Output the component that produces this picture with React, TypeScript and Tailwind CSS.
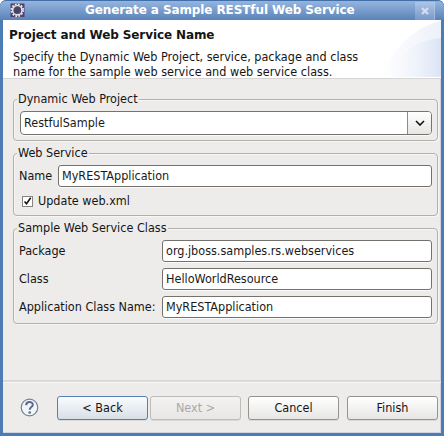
import type { ReactNode } from "react";

function Group({ title, className, children }: { title: string; className: string; children: ReactNode }) {
  return (
    <section className={`relative ml-[10px] w-[425px] rounded-[4px] border border-[#b2b0ad] shadow-[inset_1px_1px_0_#f8f7f6,1px_1px_0_#f8f7f6] ${className}`}>
      <h2 className="absolute -top-[9px] left-[3px] bg-[#edeceb] pr-px pl-px leading-[15px]">{title}</h2>
      {children}
    </section>
  );
}

function Field({ value, className }: { value: string; className: string }) {
  return (
    <input
      readOnly
      value={value}
      className={`h-[22px] rounded-[3px] border border-[#75726e] bg-white pr-1 pb-px pl-[3px] text-[#1a1a1a] shadow-[0_1px_0_#fafafa] outline-none ${className}`}
    />
  );
}

function Row({ label, value }: { label: string; value: string }) {
  return (
    <div className="flex h-[22px] items-center pl-[5px]">
      <label className="w-[144px] pb-[2px]">{label}</label>
      <Field value={value} className="-ml-px w-[270px]" />
    </div>
  );
}

function Button({ children, className }: { children: ReactNode; className: string }) {
  return (
    <button className={`h-[24px] w-[91px] shrink-0 rounded-[3px] border pb-px shadow-[0_1px_0_#d9d8d6] ${className}`}>
      {children}
    </button>
  );
}

export default function App() {
  return (
    <div className="flex h-[436px] w-[444px] flex-col overflow-hidden rounded-t-[6px] bg-[#4d7bb3] font-['DejaVu_Sans_Condensed','DejaVu_Sans',sans-serif] text-[12.5px] leading-[15px] text-[#151515]">
      <header className="relative flex h-[20px] shrink-0 items-center rounded-t-[6px] border-t border-[#426fa7] bg-linear-to-b from-[#95b5de] to-[#5a83b8]">
        <svg className="ml-[10px]" width="15" height="15" viewBox="0 0 15 15">
          <rect x=".5" y=".5" width="14" height="13.5" fill="#51406f" />
          <circle cx="7.3" cy="7.2" r="5.9" fill="none" stroke="#e9e9ec" strokeWidth="1.8" strokeDasharray="1.7 1.39" />
          <circle cx="7.3" cy="7.2" r="4.7" fill="#4a4368" stroke="#dddde2" strokeWidth="1.7" />
        </svg>
        <h1 className="absolute top-px left-[85px] w-[270px] whitespace-nowrap font-['DejaVu_Sans',sans-serif] text-[12px] leading-[16px] font-bold tracking-[-0.1px] text-white">
          Generate a Sample RESTful Web Service
        </h1>
        <button aria-label="Close" className="mr-[9px] ml-auto flex h-[18px] w-[20px] items-center justify-center border-r border-[#b5caea]/60 bg-linear-to-b from-[#adc5e7] to-[#7798c8]">
          <svg width="8" height="8" viewBox="0 0 8 8"><path d="M1 1 7 7M7 1 1 7" stroke="#d2def0" strokeWidth="2.4" /></svg>
        </button>
      </header>
      <main className="mx-[3px] mb-[3px] flex min-h-0 flex-1 flex-col bg-[#edeceb] shadow-[inset_-1px_0_0_#cbd6e5,inset_0_-1px_0_#cbd6e5]">
        <div className="relative h-[59px] shrink-0 border-b border-[#d7d5d3] bg-white">
          <svg className="absolute top-0 right-0" width="62" height="57" viewBox="0 0 62 57">
            <defs>
              <linearGradient id="sweep"><stop stopColor="#fff" /><stop offset="1" stopColor="#edf1fa" /></linearGradient>
              <linearGradient id="sweep-low"><stop stopColor="#fff" stopOpacity="0" /><stop offset="1" stopColor="#dbe4f5" /></linearGradient>
            </defs>
            <path d="M0 57C12 34 32 7 62 1V57Z" fill="url(#sweep)" />
            <path d="M5 57C16 38 34 20 62 18V57Z" fill="url(#sweep-low)" />
          </svg>
          <h2 className="relative pt-[7px] pl-[6px] font-['DejaVu_Sans',sans-serif] text-[12px] leading-[16px] font-bold tracking-[-0.1px]">Project and Web Service Name</h2>
          <p className="relative pt-[7px] pl-[10px] leading-[14.5px] tracking-[0.015px] whitespace-nowrap">
            Specify the Dynamic Web Project, service, package and class<br />name for the sample web service and web service class.
          </p>
        </div>
        <Group title="Dynamic Web Project" className="mt-[20px] h-[42px] shrink-0 pt-[11px] pl-[6px]">
          <div className="flex h-[24px] w-[412px] overflow-hidden rounded-[4px] border border-[#77736f] bg-white shadow-[0_1px_0_#fafafa]">
            <input readOnly value="RestfulSample" className="min-w-0 flex-1 pb-px pl-[3px] text-[#1a1a1a] outline-none" />
            <div className="flex w-[24px] items-center justify-center border-l border-[#8e8b88] bg-linear-to-b from-white to-[#e7e6e4]">
              <svg width="10" height="6" viewBox="0 0 10 6"><path d="m1 1 4 4 4-4" fill="none" stroke="#111" strokeWidth="1.6" /></svg>
            </div>
          </div>
        </Group>
        <Group title="Web Service" className="mt-[12px] h-[63px] shrink-0 pt-[11px]">
          <div className="flex h-[22px] items-center pl-[5px]">
            <label className="w-[39px] pb-px">Name</label>
            <Field value="MyRESTApplication" className="w-[374px]" />
          </div>
          <label className="mt-[5px] flex h-[18px] items-center pl-[8px]">
            <svg width="11" height="11" viewBox="0 0 11 11"><rect x=".5" y=".5" width="10" height="10" fill="#fff" stroke="#888581" /><path d="m2.5 5.5 2 2.3 4.2-6" fill="none" stroke="#111" strokeWidth="1.5" /></svg>
            <span className="ml-[5px] pb-px">Update web.xml</span>
          </label>
        </Group>
        <Group title="Sample Web Service Class" className="mt-[12px] flex h-[96px] shrink-0 flex-col gap-[6px] pt-[11px]">
          <Row label="Package" value="org.jboss.samples.rs.webservices" />
          <Row label="Class" value="HelloWorldResource" />
          <Row label="Application Class Name:" value="MyRESTApplication" />
        </Group>
        <footer className="mt-auto flex h-[53px] items-start border-t-2 border-t-[#dbd9d7] pt-[14px] shadow-[inset_0_1px_0_#f8f8f8]">
          <svg className="mt-[2px] ml-[17px]" width="19" height="19" viewBox="0 0 19 19">
            <circle cx="9.5" cy="9.5" r="8.3" fill="#f4f5f7" stroke="#7283a2" strokeWidth="1.2" />
            <path d="M6.2 7.2C6.2 3 13 3.2 12.8 6.9 12.6 9.2 9.7 8.9 9.7 11.8" fill="none" stroke="#586b90" strokeWidth="2" /><circle cx="9.7" cy="14.5" r="1.3" fill="#586b90" />
          </svg>
          <Button className="ml-[18px] border-[#5480b4] bg-linear-to-b from-[#fafcfe] to-[#d7dfe6]">&lt; Back</Button>
          <Button className="ml-[2px] border-[#bebcb9] bg-linear-to-b from-[#f3f2f1] to-[#e8e7e5] text-[#aaa8a5]">Next &gt;</Button>
          <Button className="ml-[7px] border-[#96938f] bg-linear-to-b from-white to-[#e7e6e4]">Cancel</Button>
          <Button className="ml-[8px] border-[#96938f] bg-linear-to-b from-white to-[#e7e6e4]">Finish</Button>
        </footer>
      </main>
    </div>
  );
}
